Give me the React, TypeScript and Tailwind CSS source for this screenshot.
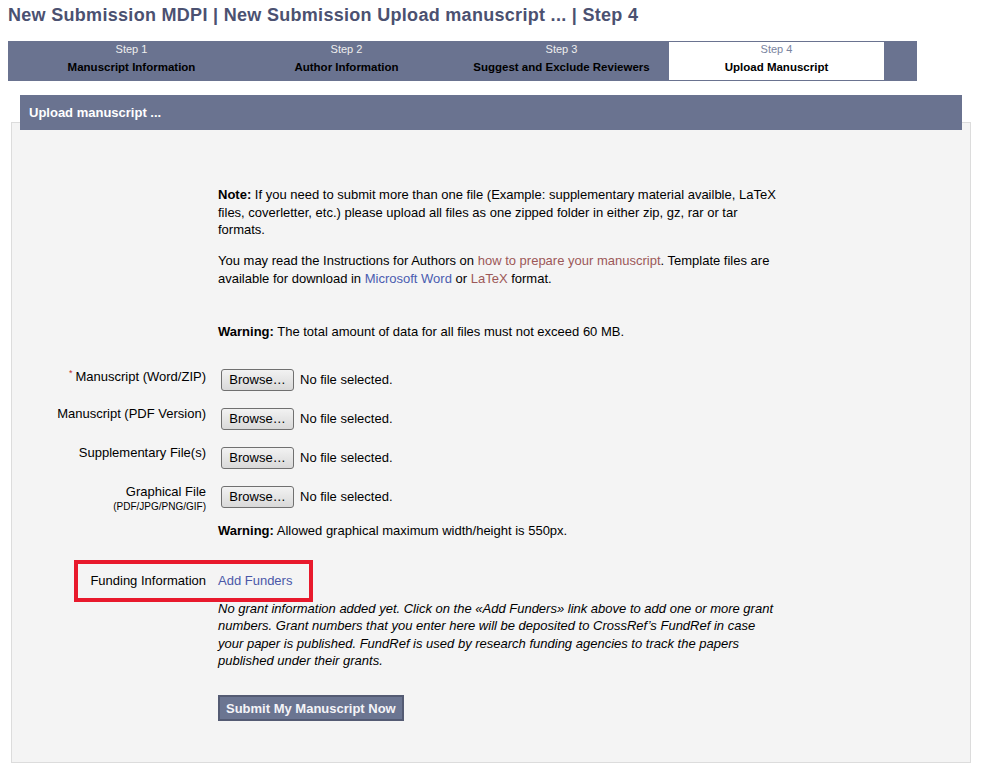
import React from 'react'

const steps = [
  { n: 'Step 1', label: 'Manuscript Information' },
  { n: 'Step 2', label: 'Author Information' },
  { n: 'Step 3', label: 'Suggest and Exclude Reviewers' },
  { n: 'Step 4', label: 'Upload Manuscript', active: true },
]

const fileRows = [
  { label: 'Manuscript (Word/ZIP)', required: true },
  { label: 'Manuscript (PDF Version)' },
  { label: 'Supplementary File(s)' },
  { label: 'Graphical File', sub: '(PDF/JPG/PNG/GIF)' },
]

function FileInput() {
  return (
    <div className="flex items-center">
      <button className="ml-[3px] h-[22px] w-[73px] rounded-[3px] border border-[#707070] bg-gradient-to-b from-[#f2f2f2] to-[#d9d9d9] text-[13px] leading-none text-black">
        Browse…
      </button>
      <span className="ml-[6px] text-[13px] leading-[22px] text-black">No file selected.</span>
    </div>
  )
}

export default function App() {
  return (
    <div className="min-h-[776px] w-[984px] bg-white font-['Liberation_Sans',Arial,sans-serif] text-black">
      {/* Page title */}
      <h1 className="pl-[8px] pt-[4px] text-[18px] font-bold leading-[22px] tracking-[0.3px] text-[#4b5171]">
        New Submission MDPI | New Submission Upload manuscript ... | Step 4
      </h1>

      {/* Step bar */}
      <div className="ml-[8px] mt-[15px] flex h-[40px] w-[909px] bg-[#6a7390] py-[1px] pl-[16px]">
        {steps.map(s => (
          <div
            key={s.n}
            className={
              s.active
                ? 'flex w-[215px] flex-col items-center bg-white'
                : 'flex w-[215px] flex-col items-center'
            }
          >
            <span
              className={
                s.active
                  ? 'mt-[1px] text-[11px] leading-[13px] text-[#7a84a0]'
                  : 'mt-[1px] text-[11px] leading-[13px] text-[#eeeeee]'
              }
            >
              {s.n}
            </span>
            <span className="mt-[5px] text-[11.5px] font-bold leading-[13px] text-black">{s.label}</span>
          </div>
        ))}
      </div>

      {/* Section */}
      <div className="ml-[11px] mt-[14px] w-[960px]">
        <div className="relative z-10 mx-[9px] flex h-[35px] items-center bg-[#6a7390] pl-[9px] text-[13px] font-bold text-white">
          Upload manuscript ...
        </div>
        <div className="-mt-[8px] border border-[#dcdcdc] bg-[#f4f4f4] pb-[41px] pt-[63px] text-[13px] leading-[17.5px]">
          <div className="ml-[206px] w-[565px]">
            <p>
              <b>Note:</b> If you need to submit more than one file (Example: supplementary material availble, LaTeX
              files, coverletter, etc.) please upload all files as one zipped folder in either zip, gz, rar or tar
              formats.
            </p>
            <p className="mt-[13.75px]">
              You may read the Instructions for Authors on{' '}
              <a className="text-[#9c5858]">how to prepare your manuscript</a>. Template files are available for
              download in <a className="text-[#4a5cb0]">Microsoft Word</a> or{' '}
              <a className="text-[#9c5858]">LaTeX</a> format.
            </p>
            <p className="mt-[36px]">
              <b>Warning:</b> The total amount of data for all files must not exceed 60 MB.
            </p>
          </div>

          <div className="mt-[28px] flex flex-col gap-[17px]">
            {fileRows.map(r => (
              <div key={r.label} className="flex h-[22px] items-start">
                <div
                  className={
                    r.required
                      ? 'mt-[-1px] flex w-[194px] flex-col items-end text-right'
                      : 'mt-[-3px] flex w-[194px] flex-col items-end text-right'
                  }
                >
                  <span className="leading-[17px]">
                    {r.required && <sup className="mr-[3px] text-[9px] text-[#c03030]">*</sup>}
                    {r.label}
                  </span>
                  {r.sub && <span className="mt-[1px] text-[10px] leading-[12px]">{r.sub}</span>}
                </div>
                <div className="ml-[12px]">
                  <FileInput />
                </div>
              </div>
            ))}
          </div>

          <p className="ml-[206px] mt-[14px]">
            <b>Warning:</b> Allowed graphical maximum width/height is 550px.
          </p>

          <div className="relative mt-[33px] flex">
            <div className="w-[194px] text-right">Funding Information</div>
            <a className="ml-[12px] text-[#4a58a8]">Add Funders</a>
            <div className="absolute left-[62px] top-[-12px] h-[42px] w-[239px] border-[4px] border-[#e8192c]" />
          </div>

          <p className="ml-[206px] mt-[10px] w-[565px] italic">
            No grant information added yet. Click on the «Add Funders» link above to add one or more grant numbers.
            Grant numbers that you enter here will be deposited to CrossRef’s FundRef in case your paper is published.
            FundRef is used by research funding agencies to track the papers published under their grants.
          </p>

          <button className="ml-[206px] mt-[25.5px] h-[26px] border-2 border-[#545b73] bg-[#6b7591] px-[6px] text-[13px] font-bold text-[#f4f4f8]">
            Submit My Manuscript Now
          </button>
        </div>
      </div>
    </div>
  )
}
